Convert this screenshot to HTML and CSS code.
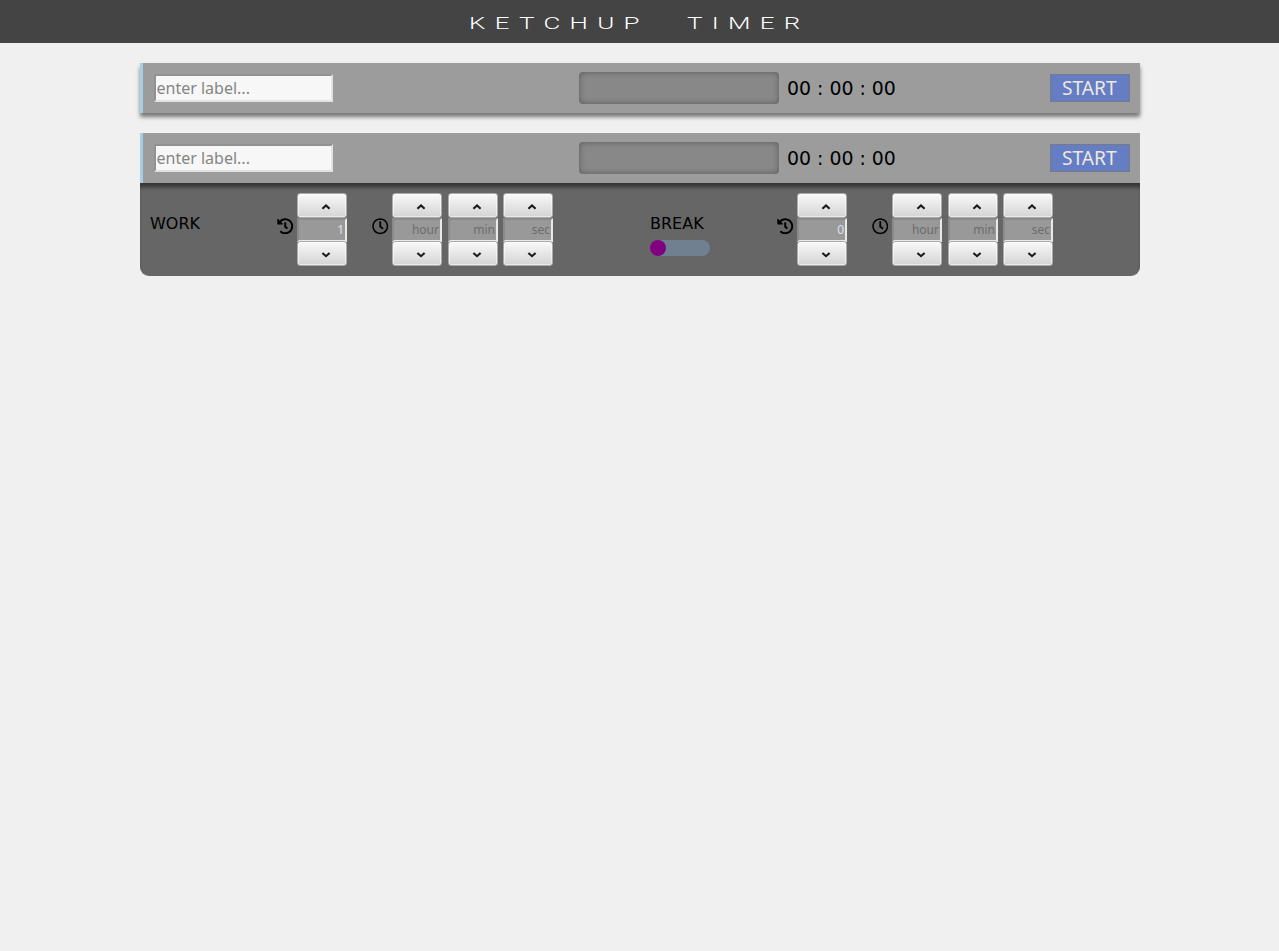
FILE: index.html
```html
<!DOCTYPE html>
<html lang="en">
<head>
<meta charset="utf-8">
<title>Ketchup Timer</title>
<link rel="stylesheet" href="styles.css">
</head>
<body>
<svg class="defs" aria-hidden="true">
<symbol id="history" viewBox="0 0 512 512"><path d="M504 255.531c.253 136.64-111.18 248.372-247.82 248.468-59.015.042-113.223-20.53-155.822-54.911-11.077-8.94-11.905-25.541-1.839-35.607l11.267-11.267c8.609-8.609 22.353-9.551 31.891-1.984C173.062 425.135 212.781 440 256 440c101.705 0 184-82.311 184-184 0-101.705-82.311-184-184-184-48.814 0-93.149 18.969-126.068 49.932l50.754 50.754c10.08 10.08 2.941 27.314-11.313 27.314H24c-8.837 0-16-7.163-16-16V38.627c0-14.254 17.234-21.393 27.314-11.314l49.372 49.372C129.209 34.136 189.552 8 256 8c136.81 0 247.747 110.78 248 247.531zm-180.912 78.784l9.823-12.63c8.138-10.463 6.253-25.542-4.21-33.679L288 256.349V152c0-13.255-10.745-24-24-24h-16c-13.255 0-24 10.745-24 24v135.651l65.409 50.874c10.463 8.137 25.541 6.253 33.679-4.21z"/></symbol>
<symbol id="clock" viewBox="0 0 512 512"><path d="M256 8C119 8 8 119 8 256s111 248 248 248 248-111 248-248S393 8 256 8zm0 448c-110.5 0-200-89.5-200-200S145.5 56 256 56s200 89.5 200 200-89.5 200-200 200zm61.8-104.4l-84.9-61.7c-3.1-2.3-4.9-5.9-4.9-9.7V116c0-6.6 5.4-12 12-12h32c6.6 0 12 5.4 12 12v141.7l66.8 48.6c5.4 3.9 6.5 11.4 2.6 16.8L334.6 349c-3.9 5.3-11.4 6.5-16.8 2.6z"/></symbol>
<symbol id="up" viewBox="0 0 10 6"><path d="M1.4 4.8 5 1.5 8.6 4.8" fill="none" stroke="#1a1a1a" stroke-width="2.1"/></symbol>
<symbol id="down" viewBox="0 0 10 6"><path d="M1.4 .9 5 4.2 8.6 .9" fill="none" stroke="#1a1a1a" stroke-width="2.1"/></symbol>
</svg>
<header class="header"><h1 class="title">KETCHUP <span class="word">TIMER</span></h1></header>
<main class="timers">
<section class="timer raised">
<div class="bar"><input class="label" placeholder="enter label..."><div class="progress"></div><div class="time">00 : 00 : 00</div><button class="start">START</button></div>
</section>
<section class="timer">
<div class="bar"><input class="label" placeholder="enter label..."><div class="progress"></div><div class="time">00 : 00 : 00</div><button class="start">START</button></div>
<div class="settings">
<div class="group">
<div class="name">WORK</div>
<svg class="icon"><use href="#history"/></svg>
<div class="spin count"><button class="step"><svg><use href="#up"/></svg></button><input class="value" value="1"><button class="step"><svg><use href="#down"/></svg></button></div>
<svg class="icon"><use href="#clock"/></svg>
<div class="spin hour"><button class="step"><svg><use href="#up"/></svg></button><input class="value" placeholder="hour"><button class="step"><svg><use href="#down"/></svg></button></div>
<div class="spin min"><button class="step"><svg><use href="#up"/></svg></button><input class="value" placeholder="min"><button class="step"><svg><use href="#down"/></svg></button></div>
<div class="spin"><button class="step"><svg><use href="#up"/></svg></button><input class="value" placeholder="sec"><button class="step"><svg><use href="#down"/></svg></button></div>
</div>
<div class="group">
<div class="name">BREAK<div class="toggle"><div class="knob"></div></div></div>
<svg class="icon"><use href="#history"/></svg>
<div class="spin count"><button class="step"><svg><use href="#up"/></svg></button><input class="value" value="0"><button class="step"><svg><use href="#down"/></svg></button></div>
<svg class="icon"><use href="#clock"/></svg>
<div class="spin hour"><button class="step"><svg><use href="#up"/></svg></button><input class="value" placeholder="hour"><button class="step"><svg><use href="#down"/></svg></button></div>
<div class="spin min"><button class="step"><svg><use href="#up"/></svg></button><input class="value" placeholder="min"><button class="step"><svg><use href="#down"/></svg></button></div>
<div class="spin"><button class="step"><svg><use href="#up"/></svg></button><input class="value" placeholder="sec"><button class="step"><svg><use href="#down"/></svg></button></div>
</div>
</div>
</section>
</main>
</body>
</html>
```
FILE: styles.css
```css
* { box-sizing: border-box; }
body { margin: 0; background: #f0f0f0; font-family: "DejaVu Sans", sans-serif; font-size: 16px; color: #000; }
.defs { display: none; }
.header { height: 43px; background: #444; padding-left: 469px; }
.title { margin: 0; color: #fff; font: 300 17px/47px Roboto, sans-serif; letter-spacing: 6.1px; white-space: nowrap; width: 300px; transform: scaleX(1.525); transform-origin: left; }
.word { margin-left: 14.8px; }
.timers { width: 1000px; margin: 20px 0 0 140px; }
.timer { margin-bottom: 20px; }
.bar { display: flex; align-items: center; height: 50px; background: #9c9c9c; border-left: 3px solid #a5cfe3; padding: 0 10px 0 11px; }
.raised .bar { box-shadow: 0 4px 4px rgba(0,0,0,.5); }
.label { width: 179px; height: 28px; border: 2px solid; border-color: #929292 #e2e2e2 #e2e2e2 #929292; background: #f7f7f7; padding: 0 0 0 .5px; margin: 0; font: 16px "Noto Sans", sans-serif; }
.label::placeholder { color: #858585; }
.progress { width: 200px; height: 32px; margin-left: 246px; background: #888; border-radius: 4px; box-shadow: inset 0 0 6px rgba(0,0,0,.35); }
.time { font-size: 18.9px; margin-left: 8px; white-space: nowrap; }
.start { margin-left: auto; width: 80px; height: 28px; padding: 0 1.5px 0 0; border: 1px solid #777985; background: #657dc5; color: #eee8df; font: 19.2px/24px "Noto Sans", sans-serif; }
.settings { display: flex; height: 93px; background: #666; border-radius: 0 0 9px 9px; box-shadow: inset 0 6px 4px -2px rgba(0,0,0,.5); }
.group { width: 500px; display: flex; align-items: flex-start; padding: 10px 0 0 10px; }
.name { width: 127px; padding-top: 21px; line-height: 20px; }
.toggle { width: 60px; height: 16px; margin-top: 6px; background: #708090; border-radius: 8px; }
.knob { width: 16px; height: 16px; border-radius: 50%; background: #800080; }
.icon { width: 16.5px; height: 16.5px; margin: 25px 3.5px 0 0; }
.spin { width: 50px; display: flex; flex-direction: column; }
.count { margin-right: 25px; }
.hour { margin-right: 6px; }
.min { margin-right: 5px; }
.step { display: flex; align-items: center; justify-content: center; height: 25px; padding: 3px 0 0 8px; border: 1px solid #aaa; border-radius: 3px; background: linear-gradient(#f9f9f9, #d4d4d4); box-shadow: inset 0 0 0 1px rgba(255,255,255,.5); }
.step svg { width: 10px; height: 6px; }
.value { width: 50px; height: 24px; margin: 0 0 -1px; border: 2px solid; border-color: #8a8a8a #e9e9e9 #e9e9e9 #8a8a8a; background: #999; color: #dce0ec; text-align: right; padding: 0 1px 1px 0; font: 12px "Noto Sans", sans-serif; }
.value::placeholder { color: #6d6d6d; }
```
